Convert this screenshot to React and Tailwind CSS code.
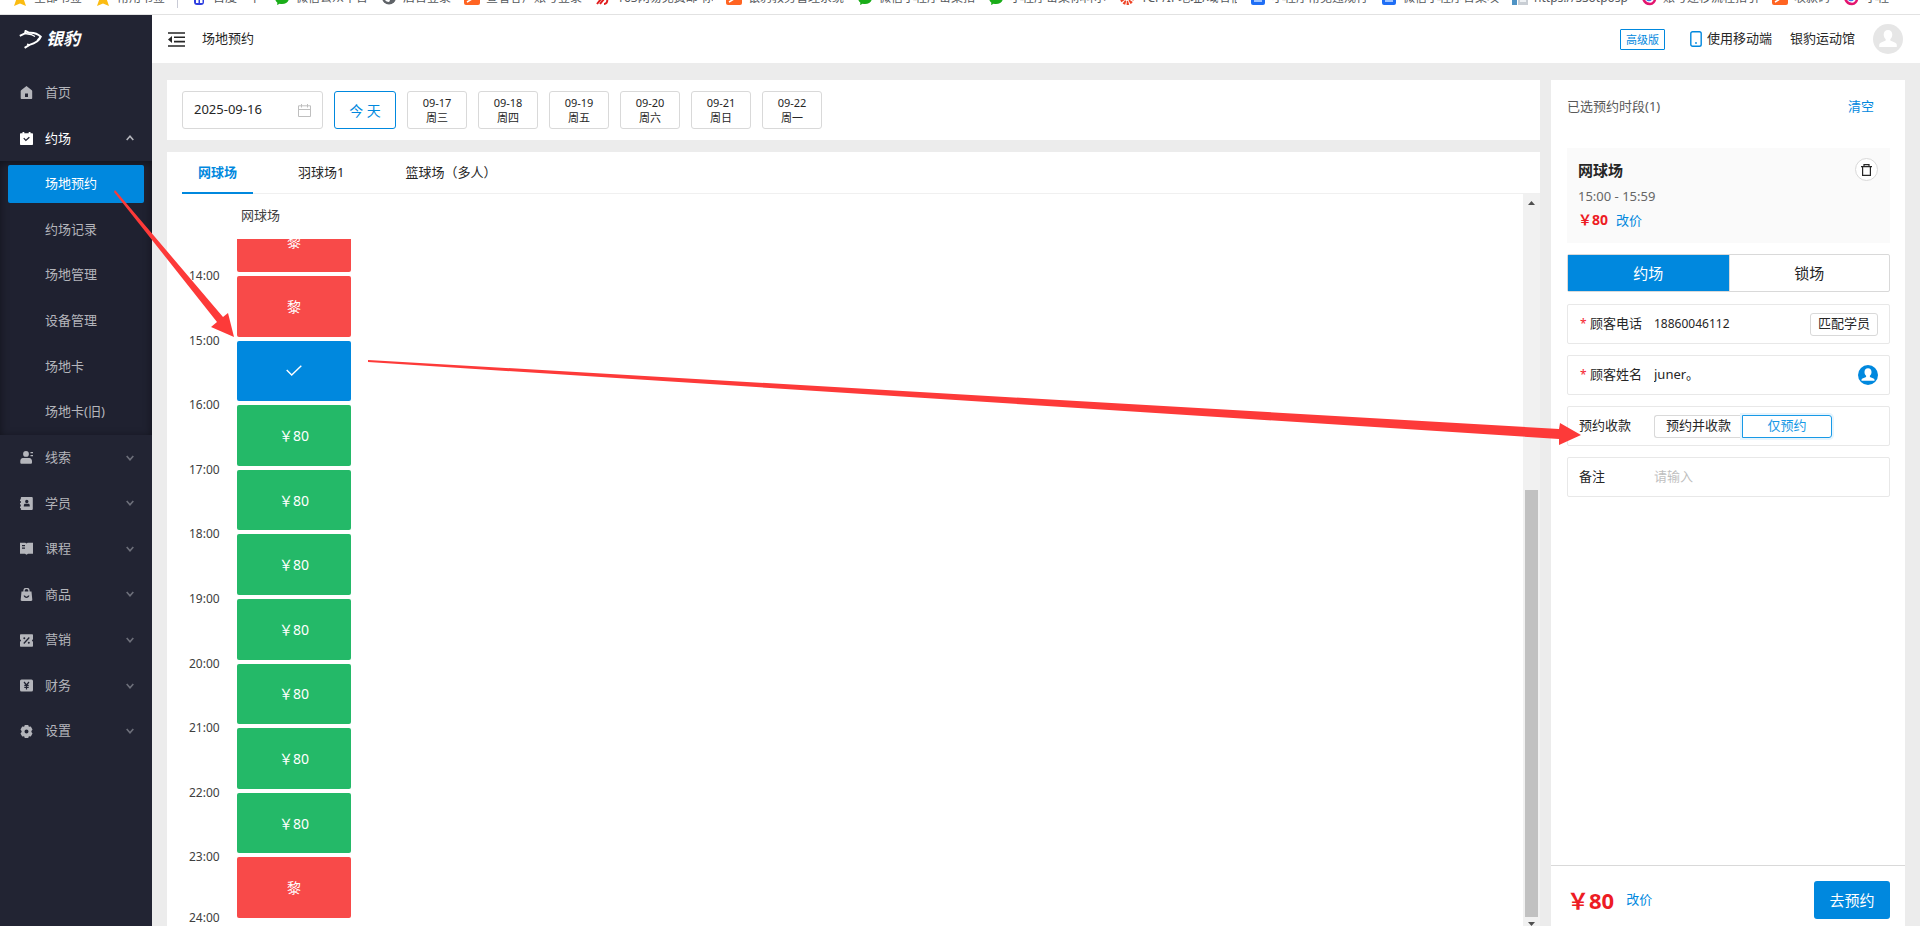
import { useState } from "react";
import clsx from "clsx";

const bookmarks = [
  { icon: "star", text: "全部书签" },
  { icon: "star", text: "常用书签", divider: true },
  { icon: "paw", text: "百度一下" },
  { icon: "chat", text: "微信公众平台" },
  { icon: "globe", text: "后台登录" },
  { icon: "orange", text: "查看客户账号登录" },
  { icon: "netease", text: "163网易免费邮-你" },
  { icon: "orange", text: "银豹教务管理系统" },
  { icon: "chat", text: "微信小程序密集指" },
  { icon: "chat", text: "小程序密集你科尔" },
  { icon: "ring", text: "TCP/IP地址/域名信" },
  { icon: "blue", text: "小程序常见违规行" },
  { icon: "blue", text: "微信小程序合集攻" },
  { icon: "server", text: "https://SSotposp" },
  { icon: "swirl", text: "账号迁移流程指引" },
  { icon: "orange", text: "收款码" },
  { icon: "swirl", text: "小程" },
];

const subMenu = ["场地预约", "约场记录", "场地管理", "设备管理", "场地卡", "场地卡(旧)"];

const lowerMenu = [
  { icon: "lead", text: "线索" },
  { icon: "student", text: "学员" },
  { icon: "course", text: "课程" },
  { icon: "goods", text: "商品" },
  { icon: "promo", text: "营销" },
  { icon: "finance", text: "财务" },
  { icon: "setting", text: "设置" },
];

const days = [
  ["09-17", "周三"],
  ["09-18", "周四"],
  ["09-19", "周五"],
  ["09-20", "周六"],
  ["09-21", "周日"],
  ["09-22", "周一"],
];

const courts = ["网球场", "羽球场1", "篮球场（多人）"];

const slots = [
  { time: "14:00", state: "booked" },
  { time: "15:00", state: "picked" },
  { time: "16:00", state: "free" },
  { time: "17:00", state: "free" },
  { time: "18:00", state: "free" },
  { time: "19:00", state: "free" },
  { time: "20:00", state: "free" },
  { time: "21:00", state: "free" },
  { time: "22:00", state: "free" },
  { time: "23:00", state: "booked" },
];

function BookmarkIcon({ name }) {
  return (
    <svg viewBox="0 0 16 16" className="size-4 shrink-0">
      {name === "star" && (
        <path fill="#fbbc12" d="M8 0l2.4 5.2 5.6.6-4.2 3.8L14 16l-6-2.6L2 16l2.2-6.4L0 5.8l5.6-.6z" />
      )}
      {name === "paw" && (
        <g fill="#2f3fe0">
          <circle cx="8" cy="3" r="2.5" />
          <rect x="3" y="6" width="10" height="9" rx="3" />
          <path fill="#fff" d="M5 9.500h2.500v3.500h-2.500zM9 9.500h2.500v3.500h-2.500z" />
        </g>
      )}
      {name === "chat" && (
        <path fill="#1aad19" d="M8 2c4 0 7 2.500 7 6s-3 6-7 6c-1 0-1.600-.1-2.400-.3L3 15l.4-2.300C2 11.600 1 10 1 8c0-3.500 3-6 7-6z" />
      )}
      {name === "globe" && (
        <g>
          <circle cx="8" cy="7.500" r="7" fill="#5f6368" />
          <path fill="#fff" d="M3 6c2 0 3 1.500 5 1.500S9 11 8 12C5 12 3 10 3 6z" />
        </g>
      )}
      {name === "orange" && (
        <g>
          <rect width="16" height="15" rx="2" fill="#ff6422" />
          <path d="M3 12l5-3 5-5M5 5l4 1" stroke="#fff" strokeWidth="1.500" fill="none" />
        </g>
      )}
      {name === "netease" && (
        <path d="M2 3h7l-1 4H3M3 9h9c1 3-1 5-3 5M6 9l-4 5M9 9l-4 5M12 2l-1 6" stroke="#e01e1e" strokeWidth="2" fill="none" />
      )}
      {name === "ring" && (
        <circle cx="8" cy="8" r="5" fill="none" stroke="#ee4426" strokeWidth="4" strokeDasharray="2 1" />
      )}
      {name === "blue" && (
        <g>
          <rect x="1" width="14" height="15" rx="2" fill="#1f6ef5" />
          <rect x="4" y="7" width="8" height="5" fill="#9fc4ff" />
        </g>
      )}
      {name === "server" && (
        <g>
          <rect x="0" y="1" width="5" height="14" fill="#4f93c4" />
          <rect x="6" y="3" width="10" height="12" fill="#c9ced4" />
          <rect x="8" y="8" width="6" height="4" fill="#eef1f4" />
        </g>
      )}
      {name === "swirl" && (
        <g fill="none" strokeWidth="2.500">
          <path d="M2 8c1 4 4 6 7 6s5-3 5-5" stroke="#e3156f" />
          <circle cx="8" cy="8" r="2" stroke="#3c7bea" />
        </g>
      )}
    </svg>
  );
}

function MenuIcon({ name }) {
  return (
    <svg viewBox="0 0 13 13" className="size-[13px] shrink-0" fill="currentColor">
      {name === "home" && (
        <path fillRule="evenodd" d="M6.500 0l5.300 4.200c.3.300.4.500.4.900V12c0 .6-.4 1-1 1H1.700c-.6 0-1-.4-1-1V5.100c0-.4.1-.6.4-.9zM5 7.500V11h3V7.500z" />
      )}
      {name === "booking" && (
        <path fillRule="evenodd" d="M2.500 0h1.800v1.200h4.400V0h1.800v1.200H12c.6 0 1 .4 1 1V12c0 .6-.4 1-1 1H1c-.6 0-1-.4-1-1V2.200c0-.6.4-1 1-1h1.500zM3.300 6.500l2.500 2.700 4-3.500-.9-1-3 2.700L4.200 5.700z" />
      )}
      {name === "lead" && (
        <path d="M6 0a2.900 2.900 0 110 5.800A2.900 2.900 0 016 0zM2.800 7h6.500c1.600 0 2.700 1.500 2.700 3v1.500c0 .8-.5 1.300-1.300 1.300H1.600c-.8 0-1.300-.5-1.300-1.300V10c0-1.500 1-3 2.500-3zM10.500 1H13v1.300h-2.500zM10.500 4H13v1.300h-2.500z" />
      )}
      {name === "student" && (
        <path fillRule="evenodd" d="M1.800 0H11.500c.8 0 1.300.5 1.300 1.300v10.400c0 .8-.5 1.300-1.300 1.300H1.800c-.6 0-1-.5-1-1V11H0V9.500h.8v-2H0V6h.8V4H0V2.500h.8V1c0-.5.4-1 1-1zM6.800 2.800a1.700 1.700 0 100 3.400 1.700 1.700 0 000-3.400zM4.600 6.800C4 7.200 3.800 8 3.800 9.500h6c0-1.500-.2-2.300-.8-2.700z" />
      )}
      {name === "course" && (
        <path fillRule="evenodd" d="M0 .8h5.300l1.200.8 1.200-.8H13v11H8l-1.500 1-1.500-1H0zM2 3v1.200h3V3zM2 5.500v1.200h3V5.500z" />
      )}
      {name === "goods" && (
        <g>
          <path d="M4 4V2.800a2.500 2.500 0 015 0V4" fill="none" stroke="currentColor" strokeWidth="1.300" />
          <path fillRule="evenodd" d="M1.500 3.500h10l.8 8.300c0 .7-.4 1.200-1.100 1.200H1.800c-.7 0-1.200-.5-1.100-1.200zM3.600 7.500c.5 3.300 5.300 3.300 5.800 0H8c-.4 1.500-2.600 1.500-3 0z" />
        </g>
      )}
      {name === "promo" && (
        <g>
          <path d="M1 .3h11c.6 0 1 .4 1 1v4.200a1 1 0 000 2v4.200c0 .6-.4 1-1 1H1c-.6 0-1-.4-1-1V7.500a1 1 0 000-2V1.300c0-.6.4-1 1-1z" />
          <path d="M3.800 9.500l5.500-6" stroke="#222433" strokeWidth="1.300" />
          <circle cx="4.300" cy="4.300" r="1" fill="#222433" />
          <circle cx="8.800" cy="8.800" r="1" fill="#222433" />
        </g>
      )}
      {name === "finance" && (
        <g>
          <rect y=".5" width="13" height="12" rx="1.500" />
          <path d="M4 3l2.500 3L9 3M6.500 6v4.500M4.300 6.300h4.400M4.300 8.300h4.400" fill="none" stroke="#222433" strokeWidth="1.200" />
        </g>
      )}
      {name === "setting" && (
        <path fillRule="evenodd" d="M4.800 0h3.400l.7 1.700 1.900-.2 1.700 2.900L11.400 6v1l1.100 1.600-1.700 2.900-1.900-.2L8.200 13H4.800l-.7-1.700-1.900.2L.5 8.600 1.600 7V6L.5 4.400l1.700-2.900 1.900.2zM6.500 4.500a2 2 0 100 4 2 2 0 000-4z" />
      )}
    </svg>
  );
}

function Chevron({ up }) {
  return (
    <svg viewBox="0 0 8 6" className={clsx("w-2 h-[6px] ml-auto", up ? "text-[#b4b5bb]" : "text-[#6d6f7a] rotate-180")}>
      <path d="M.7 5L4 1.200 7.300 5" fill="none" stroke="currentColor" strokeWidth="1.600" />
    </svg>
  );
}

function BookmarkBar() {
  return (
    <div className="h-[15px] shrink-0 overflow-hidden border-b border-[#e2e2e2] bg-white flex flex-col justify-end pb-[6px]">
      <div className="flex shrink-0 h-5 pl-[12px] text-[12px] leading-5 text-[#55585c]">
        {bookmarks.map((b, i) => (
          <div key={i} className="flex shrink-0 items-center pr-[13px]">
            <BookmarkIcon name={b.icon} />
            <span className="ml-[6px] max-w-24 overflow-hidden whitespace-nowrap">{b.text}</span>
            {b.divider && <span className="ml-[12px] h-5 border-l border-[#c9cbd6]" />}
          </div>
        ))}
      </div>
    </div>
  );
}

function Sidebar({ active, setActive }) {
  return (
    <aside className="w-[152px] shrink-0 bg-[#222433] text-[13px] text-[#b4b5bb]">
      <div className="h-[55px] flex items-start pt-[13px] pl-[19px] gap-1 text-white">
        <svg viewBox="0 0 23 19" className="w-[23px] h-[19px] mt-[2px]" fill="none" stroke="currentColor">
          <path d="M.8 5.800L6 3.300 6.600 1l3.200 1.700c5.200-.4 9 1 12 4-1.700 4.300-6 6.800-11.300 8.200L5.600 17.800" strokeWidth="2" />
          <path d="M6 3.500l6 1 4 2M21.500 6.800l-3 3.200M11 15l-3-.8" strokeWidth="1.300" />
        </svg>
        <span className="text-[17px] leading-[22px] font-bold italic">银豹</span>
      </div>
      <nav>
        <div className="grid grid-rows-2 h-[91px]">
          <a href="#home" className="flex items-center pl-5 pr-[18px]">
            <MenuIcon name="home" />
            <span className="ml-3">首页</span>
          </a>
          <button type="button" className="flex items-center pl-5 pr-[18px] text-white">
            <MenuIcon name="booking" />
            <span className="ml-3">约场</span>
            <Chevron up />
          </button>
        </div>
        <div className="grid grid-rows-6 h-[274px] px-2 bg-[#1f2130] shadow-[inset_0_2px_8px_rgba(0,0,0,0.45)]">
          {subMenu.map((item) => (
            <a
              key={item}
              href="#sub"
              onClick={() => setActive(item)}
              className={clsx(
                "flex items-center self-center h-[38px] pl-[37px] rounded-[2px]",
                active === item && "bg-[#0088de] text-white"
              )}
            >
              {item}
            </a>
          ))}
        </div>
        <div className="grid grid-rows-7 h-[319px]">
          {lowerMenu.map((item) => (
            <button key={item.text} type="button" className="flex items-center pl-5 pr-[18px]">
              <MenuIcon name={item.icon} />
              <span className="ml-3">{item.text}</span>
              <Chevron />
            </button>
          ))}
        </div>
      </nav>
    </aside>
  );
}

function Header() {
  return (
    <header className="h-12 shrink-0 bg-white flex items-center pl-4 pr-[17px] text-[13px] text-[#262626]">
      <button type="button" aria-label="收起菜单">
        <svg viewBox="0 0 17 15" className="w-[17px] h-[15px]">
          <path d="M0 1h17M6 5.300h11M6 9.600h11M0 14h17" stroke="#262626" strokeWidth="1.600" />
          <path d="M4 4v7L0 7.500z" fill="#262626" />
        </svg>
      </button>
      <h1 className="ml-[17px]">场地预约</h1>
      <div className="ml-auto flex items-center">
        <span className="h-[21px] px-[5px] leading-[19px] text-[11px] text-[#0088de] border border-[#0088de] rounded-[1px]">高级版</span>
        <button type="button" className="ml-[25px] flex items-center gap-[5px]">
          <svg viewBox="0 0 12 16" className="w-3 h-4">
            <rect x=".8" y=".8" width="10.400" height="14.400" rx="1.800" fill="none" stroke="#0088de" strokeWidth="1.400" />
            <circle cx="6" cy="12" r=".9" fill="#0088de" />
          </svg>
          使用移动端
        </button>
        <span className="ml-[18px]">银豹运动馆</span>
        <svg viewBox="0 0 30 30" className="size-[30px] ml-[18px]">
          <circle cx="15" cy="15" r="15" fill="#e6e6e6" />
          <path fill="#fff" d="M15 6c2.600 0 4.300 2 4.300 4.600 0 2-.8 3.700-2 4.600v1.300l5 2.200c1 .5 1.500 1.300 1.500 2.500V23H6.200v-1.800c0-1.200.5-2 1.500-2.500l5-2.200v-1.300c-1.200-.9-2-2.600-2-4.600C10.700 8 12.400 6 15 6z" />
        </svg>
      </div>
    </header>
  );
}

function DateBar() {
  return (
    <section className="h-[60px] shrink-0 bg-white flex items-center gap-[11px] px-[15px]">
      <label className="flex items-center w-[141px] h-[38px] px-[11px] border border-[#d9d9d9] rounded-[3px]">
        <input type="text" aria-label="日期" defaultValue="2025-09-16" className="w-full min-w-0 text-[13px] text-[#262626] outline-none" />
        <svg viewBox="0 0 13 13" className="size-[13px] shrink-0" fill="none" stroke="#bfbfbf">
          <path d="M.5 1.800h12v10.700H.5zM.5 5.500h12M3.500 0v3.500M9.500 0v3.500" />
        </svg>
      </label>
      <button type="button" className="w-[62px] h-[38px] text-[14px] text-[#0088de] border border-[#0088de] rounded-[3px]">
        今 天
      </button>
      {days.map(([date, week]) => (
        <button
          key={date}
          type="button"
          className="w-[60px] h-[38px] text-[11px] leading-[15px] text-[#262626] border border-[#d9d9d9] rounded-[3px]"
        >
          {date}
          <br />
          {week}
        </button>
      ))}
    </section>
  );
}

function Slot({ state }) {
  return (
    <button
      type="button"
      className={clsx(
        "w-[114px] h-full rounded-[2px] text-white text-[14px] flex items-center justify-center",
        state === "booked" && "bg-[#f84a49]",
        state === "picked" && "bg-[#0088de]",
        state === "free" && "bg-[#24b968]"
      )}
    >
      {state === "booked" && "黎"}
      {state === "free" && "￥80"}
      {state === "picked" && (
        <svg viewBox="0 0 16 11" className="w-4 h-[11px]">
          <path d="M.7 5l5 5L15.300.7" fill="none" stroke="#fff" strokeWidth="1.400" />
        </svg>
      )}
    </button>
  );
}

function TimeLabel({ children }) {
  return <span className="w-12 h-0 shrink-0 flex items-center text-[12px] text-[#404040]">{children}</span>;
}

function ScrollBar() {
  return (
    <div className="w-[17px] shrink-0 bg-[#f1f1f1] flex flex-col items-center">
      <div className="h-[17px] shrink-0 flex items-center">
        <svg viewBox="0 0 7 4" className="w-[7px] h-1">
          <path d="M0 4l3.500-4L7 4z" fill="#505050" />
        </svg>
      </div>
      <div className="grow-[279] basis-0" />
      <div className="grow-[427] basis-0 w-[13px] bg-[#c1c1c1]" />
      <div className="h-[9px] shrink-0 flex items-end">
        <svg viewBox="0 0 7 4" className="w-[7px] h-1">
          <path d="M0 0l3.500 4L7 0z" fill="#505050" />
        </svg>
      </div>
    </div>
  );
}

function Schedule() {
  const [court, setCourt] = useState(courts[0]);

  return (
    <section className="flex-1 min-h-0 bg-white flex flex-col">
      <div className="flex h-[42px] shrink-0 gap-[29px] ml-[15px] border-b border-[#f0f0f0]">
        {courts.map((c) => (
          <button
            key={c}
            type="button"
            onClick={() => setCourt(c)}
            className={clsx(
              "h-[42px] px-4 pt-[2px] text-[13px] border-b-2",
              court === c ? "border-[#0088de] text-[#0088de] font-bold" : "border-transparent text-[#262626]"
            )}
          >
            {c}
          </button>
        ))}
      </div>
      <div className="flex flex-1 min-h-0">
        <div className="flex-1 min-w-0 overflow-hidden pl-[22px]">
          <div className="h-[45px] pb-[2px] pl-[52px] flex items-center text-[13px] text-[#404040]">网球场</div>
          {/* the 13:00 slot, scrolled halfway out of view */}
          <div className="h-[33px] mb-1 pl-12 overflow-hidden flex flex-col justify-end">
            <div className="h-[61px] shrink-0">
              <Slot state="booked" />
            </div>
          </div>
          <div className="grid grid-rows-10 gap-y-1 h-[642px]">
            {slots.map((s) => (
              <div key={s.time} className="flex items-start">
                <TimeLabel>{s.time}</TimeLabel>
                <Slot state={s.state} />
              </div>
            ))}
          </div>
          <TimeLabel>24:00</TimeLabel>
        </div>
        <ScrollBar />
      </div>
    </section>
  );
}

function Field({ label, htmlFor, required, children }) {
  return (
    <div className="h-10 flex items-center px-[11px] border border-[#e8e8e8] rounded-[2px]">
      <label htmlFor={htmlFor} className="w-[75px] shrink-0 flex items-center text-[13px]">
        {required && <span className="w-[11px] pl-px text-[12px] text-[#f5222d]">*</span>}
        {label}
      </label>
      {children}
    </div>
  );
}

function OrderPanel() {
  const [payMode, setPayMode] = useState("only");

  return (
    <aside className="w-[354px] shrink-0 bg-white flex flex-col text-[#262626]">
      <div className="flex-1 min-h-0 pl-4 pr-[15px] overflow-hidden">
        <div className="h-[68px] pb-[14px] pr-4 flex items-center justify-between text-[13px]">
          <span className="text-[#595959]">已选预约时段(1)</span>
          <button type="button" className="text-[#0088de]">清空</button>
        </div>
        <div className="h-[95px] bg-[#fafafa] pl-[11px] pr-3 pt-[10px] flex items-start justify-between">
          <div>
            <h2 className="text-[15px] leading-6 font-bold">网球场</h2>
            <p className="mt-[2px] text-[13px] leading-6 text-[#666666]">15:00 - 15:59</p>
            <p className="h-6 flex items-center gap-2 leading-6">
              <b className="text-[14px] text-[#ed1c24]">￥80</b>
              <a href="#price" className="text-[13px] text-[#0088de]">改价</a>
            </p>
          </div>
          <button type="button" aria-label="删除" className="size-[23px] rounded-full border border-[#d9d9d9] bg-white flex items-center justify-center">
            <svg viewBox="0 0 11 12" className="w-[11px] h-3" fill="none" stroke="#262626" strokeWidth="1.200">
              <path d="M0 2.600h11M3 2.400V.7h5v1.700M1.600 2.800v8.500h7.800V2.800" />
            </svg>
          </button>
        </div>
        <div className="mt-[11px] h-[38px] grid grid-cols-2 border border-[#d9d9d9] rounded-[2px] text-[15px]">
          <button type="button" className="bg-[#0088de] text-white">约场</button>
          <button type="button" className="border-l border-[#d9d9d9]">锁场</button>
        </div>
        <form className="mt-3 flex flex-col gap-[11px] text-[13px]">
          <Field label="顾客电话" htmlFor="phone" required>
            <input id="phone" type="text" defaultValue="18860046112" className="flex-1 min-w-0 text-[12px] outline-none" />
            <button type="button" className="h-[23px] w-[68px] shrink-0 border border-[#d9d9d9] rounded-[3px]">匹配学员</button>
          </Field>
          <Field label="顾客姓名" htmlFor="name" required>
            <input id="name" type="text" defaultValue="juner。" className="flex-1 min-w-0 outline-none" />
            <svg viewBox="0 0 20 20" className="size-5 shrink-0">
              <circle cx="10" cy="10" r="10" fill="#0088de" />
              <path fill="#fff" d="M10 3.200c2.200 0 3.500 1.600 3.500 3.800 0 1.600-.6 3-1.600 3.800v1.200l3.600 1.500c.7.300 1 .8 1 1.500v.8h-13V15c0-.7.300-1.200 1-1.500L8.100 12v-1.200C7.100 10 6.500 8.600 6.500 7c0-2.200 1.300-3.800 3.500-3.800z" />
            </svg>
          </Field>
          <Field label="预约收款">
            <div className="flex">
              <button
                type="button"
                onClick={() => setPayMode("pay")}
                className={clsx(
                  "h-[23px] w-[88px] border rounded-l-[3px]",
                  payMode === "pay" ? "border-[#1890e0] text-[#1890e0]" : "border-[#d9d9d9] border-r-0"
                )}
              >
                预约并收款
              </button>
              <button
                type="button"
                onClick={() => setPayMode("only")}
                className={clsx(
                  "h-[23px] w-[90px] border rounded-r-[3px]",
                  payMode === "only" ? "border-[#1899e6] text-[#1899e6] shadow-[0_0_0_2px_#e6f4fd]" : "border-[#d9d9d9] border-l-0"
                )}
              >
                仅预约
              </button>
            </div>
          </Field>
          <Field label="备注" htmlFor="remark">
            <input id="remark" type="text" placeholder="请输入" className="flex-1 min-w-0 outline-none placeholder:text-[#bfbfbf]" />
          </Field>
        </form>
      </div>
      <footer className="h-[61px] shrink-0 pt-2 pl-4 pr-[15px] border-t border-[#d9d9d9] flex items-center">
        <b className="text-[22px] text-[#ed1c24]">￥80</b>
        <a href="#price" className="ml-3 text-[13px] text-[#0088de]">改价</a>
        <button type="button" className="ml-auto h-[38px] w-[76px] rounded-[3px] bg-[#0088de] text-[15px] text-white">去预约</button>
      </footer>
    </aside>
  );
}

function App() {
  const [active, setActive] = useState(subMenu[0]);

  return (
    <div className='relative h-screen overflow-hidden flex flex-col font-["Noto_Sans","Noto_Sans_CJK_SC",sans-serif]'>
      <BookmarkBar />
      <div className="flex flex-1 min-h-0">
        <Sidebar active={active} setActive={setActive} />
        <div className="flex flex-col flex-1 min-w-0 bg-[#ececec]">
          <Header />
          <main className="flex flex-1 min-h-0 gap-[11px] pt-[17px] px-[15px]">
            <div className="flex flex-col flex-1 min-w-0 gap-3">
              <DateBar />
              <Schedule />
            </div>
            <OrderPanel />
          </main>
        </div>
      </div>

      {/* guide arrows */}
      <svg className="absolute inset-0 w-full h-full pointer-events-none" fill="#fd3a39">
        <path d="M115 190L223 317 228 313 234 337 211 327 217 322 114 192z" />
        <path d="M368 360L1559 429 1560 423 1581 435 1559 445 1559 439 368 362z" />
      </svg>
    </div>
  );
}

export default App;
